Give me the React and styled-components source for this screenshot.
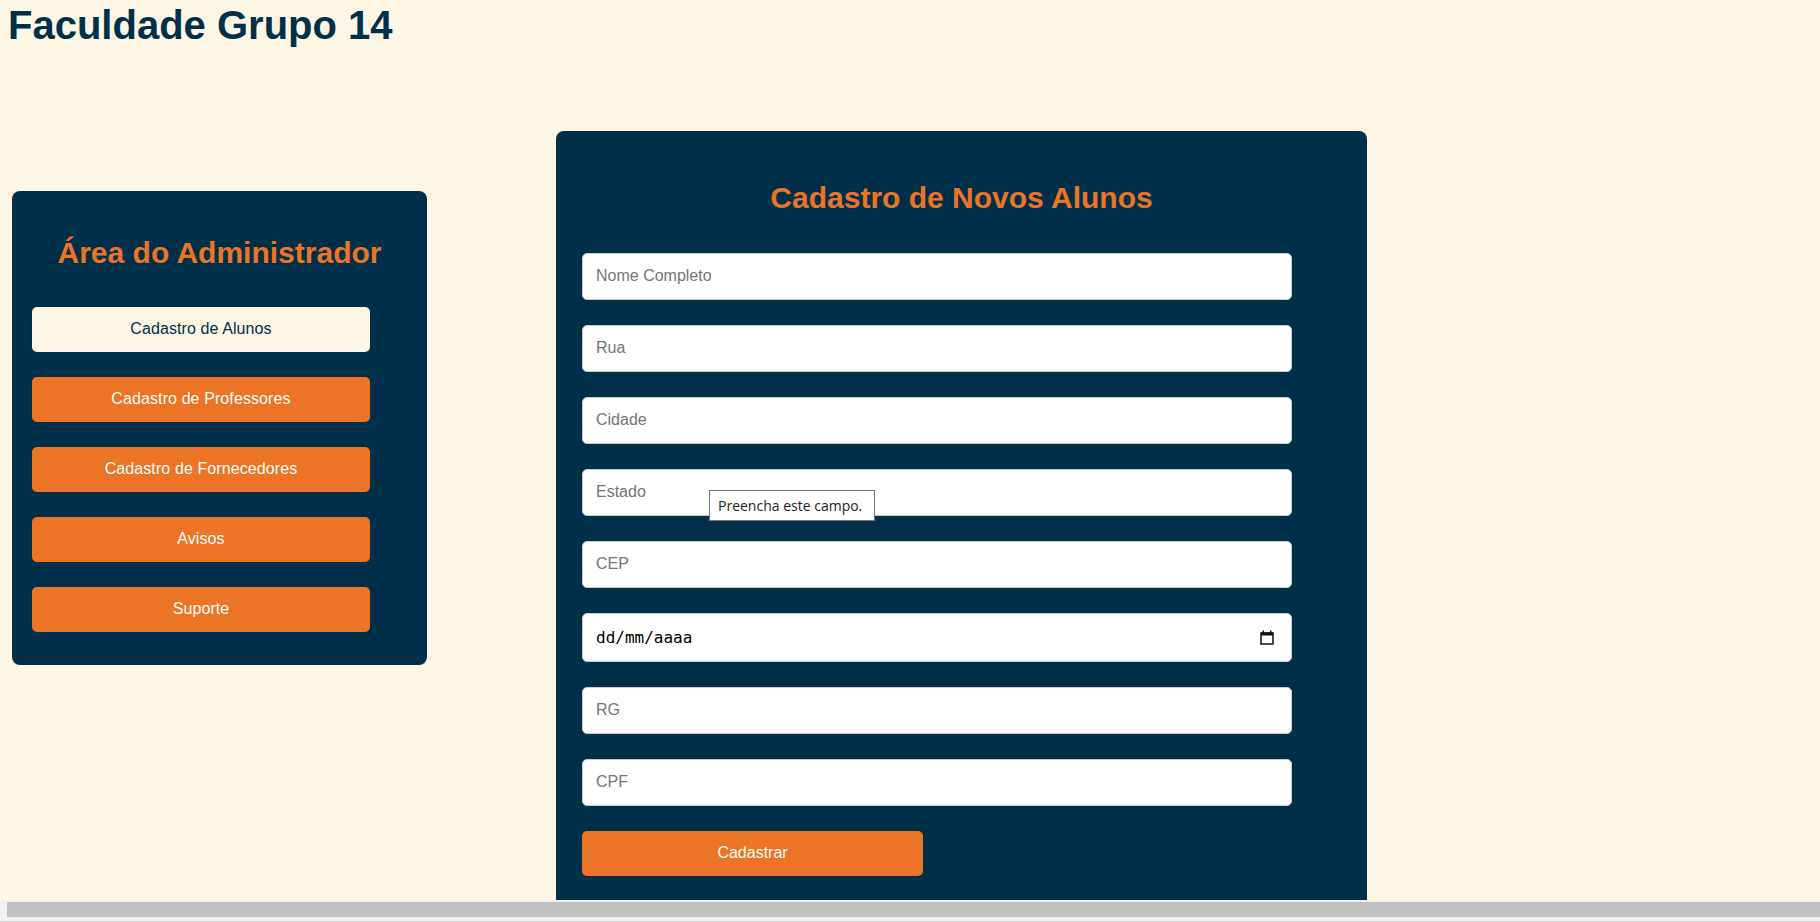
import React from "react";
import styled, { createGlobalStyle } from "styled-components";

const GlobalStyle = createGlobalStyle`
  html, body {
    margin: 0;
    padding: 0;
    overflow: hidden;
    background: #fdf6e4;
  }
  * {
    box-sizing: border-box;
  }
`;

const menuItems = [
  "Cadastro de Alunos",
  "Cadastro de Professores",
  "Cadastro de Fornecedores",
  "Avisos",
  "Suporte",
];

const fields = ["Nome Completo", "Rua", "Cidade", "Estado", "CEP"];
const fieldsAfterDate = ["RG", "CPF"];

const App = () => {
  return (
    <Page>
      <GlobalStyle />
      <Title>Faculdade Grupo 14</Title>
      <Content>
        <AdminPanel>
          <PanelTitle>Área do Administrador</PanelTitle>
          <Menu>
            {menuItems.map((item, idx) => (
              <MenuButton key={item} active={idx == 0}>
                {item}
              </MenuButton>
            ))}
          </Menu>
        </AdminPanel>

        <FormPanel>
          <FormTitle>Cadastro de Novos Alunos</FormTitle>
          <Form onSubmit={(e) => e.preventDefault()}>
            {fields.map((field) => (
              <FieldWrap key={field}>
                <Input type="text" placeholder={field} />
                {/* browser validation bubble shown over Estado */}
                {field == "Estado" && <Tooltip>Preencha este campo.</Tooltip>}
              </FieldWrap>
            ))}
            <DateField>
              <span>dd/mm/aaaa</span>
              <svg width="14" height="15" viewBox="0 0 14 15">
                <rect x="1" y="3" width="12" height="11" fill="none" stroke="#111" strokeWidth="1.5" />
                <rect x="1" y="2.5" width="12" height="3" fill="#111" />
                <rect x="2.5" y="0.5" width="1.5" height="3" fill="#111" />
                <rect x="10" y="0.5" width="1.5" height="3" fill="#111" />
              </svg>
            </DateField>
            {fieldsAfterDate.map((field) => (
              <Input key={field} type="text" placeholder={field} />
            ))}
            <SubmitButton type="submit">Cadastrar</SubmitButton>
          </Form>
        </FormPanel>
      </Content>
      <ScrollBar>
        <ScrollThumb />
      </ScrollBar>
    </Page>
  );
};

const Page = styled.div`
  min-height: 100vh;
  background: #fdf6e4;
  font-family: "Liberation Sans", Arial, sans-serif;
`;

const Title = styled.h1`
  margin: 0;
  padding: 2px 8px 0;
  font-size: 40px;
  line-height: 46px;
  font-weight: bold;
  color: #003049;
`;

const Content = styled.div`
  display: flex;
  align-items: flex-start;
`;

const AdminPanel = styled.div`
  width: 415px;
  margin: 143px 0 0 12px;
  padding: 20px 20px 33px;
  background: #003049;
  border-radius: 8px;
`;

const PanelTitle = styled.h2`
  margin: 25px 0 36px;
  text-align: center;
  font-size: 30px;
  line-height: 34.5px;
  font-weight: bold;
  color: #ec7426;
`;

const Menu = styled.div`
  display: flex;
  flex-direction: column;
  gap: 25px;
`;

const MenuButton = styled.button`
  width: 338px;
  height: 45px;
  border: none;
  border-radius: 5px;
  background: ${(p) => (p.active ? "#fdf6e4" : "#ec7426")};
  color: ${(p) => (p.active ? "#003049" : "#ffffff")};
  font-family: "Liberation Sans", Arial, sans-serif;
  font-size: 16px;
  letter-spacing: 0.1px;
  cursor: pointer;
`;

const FormPanel = styled.div`
  width: 811px;
  margin: 83px 0 0 129px;
  padding: 25px 26px 45px;
  background: #003049;
  border-radius: 8px;
`;

const FormTitle = styled(PanelTitle)`
  margin: 25px 0 37px;
`;

const Form = styled.form`
  display: flex;
  flex-direction: column;
  align-items: flex-start;
  gap: 25px;
`;

const FieldWrap = styled.div`
  position: relative;
`;

const Input = styled.input`
  display: block;
  width: 710px;
  height: 47px;
  padding: 0 13px;
  border: 1px solid #c9ced6;
  border-radius: 5px;
  background: #ffffff;
  font-family: "Liberation Sans", Arial, sans-serif;
  font-size: 16px;
  color: #222;
  outline: none;

  ::placeholder {
    color: #757575;
  }
`;

const DateField = styled.div`
  display: flex;
  align-items: center;
  justify-content: space-between;
  width: 710px;
  height: 49px;
  padding: 0 17px 0 13px;
  border: 1px solid #c9ced6;
  border-radius: 5px;
  background: #ffffff;
  font-family: "DejaVu Sans Mono", "Liberation Mono", monospace;
  font-size: 16px;
  color: #000;
`;

const Tooltip = styled.div`
  position: absolute;
  left: 127px;
  top: 21px;
  width: 166px;
  height: 31px;
  padding: 0 8px;
  display: flex;
  align-items: center;
  background: #ffffff;
  border: 1px solid #767676;
  font-family: "Open Sans", "Noto Sans", sans-serif;
  font-size: 14px;
  color: #1e1e1e;
  white-space: nowrap;
`;

const SubmitButton = styled.button`
  width: 341px;
  height: 45px;
  border: none;
  border-radius: 5px;
  background: #ec7426;
  color: #ffffff;
  font-family: "Liberation Sans", Arial, sans-serif;
  font-size: 16px;
  cursor: pointer;
`;

//Fake horizontal scrollbar from the screenshot
const ScrollBar = styled.div`
  position: fixed;
  left: 0;
  right: 0;
  bottom: 0;
  height: 22px;
  padding: 2px 0 4px 7px;
  background: #f1f1f1;
  border-bottom: 1px solid #c8cfcc;
`;

const ScrollThumb = styled.div`
  height: 100%;
  background: #c1c1c1;
`;

export default App;
